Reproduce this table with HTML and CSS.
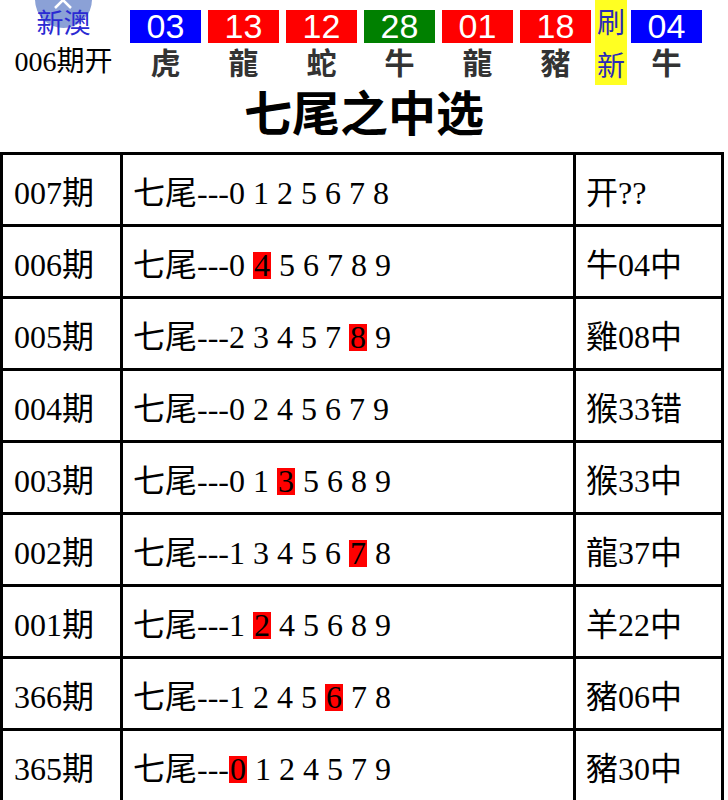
FILE: index.html
```html
<!DOCTYPE html>
<html lang="zh">
<head>
<meta charset="utf-8">
<title>七尾之中选</title>
<link rel="stylesheet" href="styles.css">
</head>
<body>
<div class="top">
  <div class="brand">
    <div class="totop"><svg width="20" height="10" viewBox="0 0 20 10"><path d="M2 9 L10 1 L18 9" fill="none" stroke="#fff" stroke-width="2.5"/></svg></div>
    <div class="xinao">新澳</div>
    <div class="issue">006期开</div>
  </div>
  <div class="balls">
    <div class="ball"><div class="num blue">03</div><div class="zod">虎</div></div>
    <div class="ball"><div class="num red">13</div><div class="zod">龍</div></div>
    <div class="ball"><div class="num red">12</div><div class="zod">蛇</div></div>
    <div class="ball"><div class="num green">28</div><div class="zod">牛</div></div>
    <div class="ball"><div class="num red">01</div><div class="zod">龍</div></div>
    <div class="ball"><div class="num red">18</div><div class="zod">豬</div></div>
    <div class="refresh">刷<br>新</div>
    <div class="ball"><div class="num blue">04</div><div class="zod">牛</div></div>
  </div>
</div>
<h1 class="title">七尾之中选</h1>
<table class="grid">
  <tr><td class="c1">007期</td><td class="c2">七尾---0 1 2 5 6 7 8</td><td class="c3">开??</td></tr>
  <tr><td class="c1">006期</td><td class="c2">七尾---0 <span class="hit">4</span> 5 6 7 8 9</td><td class="c3">牛04中</td></tr>
  <tr><td class="c1">005期</td><td class="c2">七尾---2 3 4 5 7 <span class="hit">8</span> 9</td><td class="c3">雞08中</td></tr>
  <tr><td class="c1">004期</td><td class="c2">七尾---0 2 4 5 6 7 9</td><td class="c3">猴33错</td></tr>
  <tr><td class="c1">003期</td><td class="c2">七尾---0 1 <span class="hit">3</span> 5 6 8 9</td><td class="c3">猴33中</td></tr>
  <tr><td class="c1">002期</td><td class="c2">七尾---1 3 4 5 6 <span class="hit">7</span> 8</td><td class="c3">龍37中</td></tr>
  <tr><td class="c1">001期</td><td class="c2">七尾---1 <span class="hit">2</span> 4 5 6 8 9</td><td class="c3">羊22中</td></tr>
  <tr><td class="c1">366期</td><td class="c2">七尾---1 2 4 5 <span class="hit">6</span> 7 8</td><td class="c3">豬06中</td></tr>
  <tr><td class="c1">365期</td><td class="c2">七尾---<span class="hit">0</span> 1 2 4 5 7 9</td><td class="c3">豬30中</td></tr>
</table>
</body>
</html>
```
FILE: styles.css
```css
html, body {
  margin: 0;
  padding: 0;
  background: #fff;
}
body {
  width: 728px;
  overflow: hidden;
  font-family: "Liberation Serif", "Noto Sans CJK SC", serif;
  color: #000;
}
.top {
  display: flex;
  height: 80px;
}
.brand {
  position: relative;
  width: 127px;
  margin-right: 3px;
  text-align: center;
}
.totop {
  position: absolute;
  left: 35px;
  top: -29px;
  width: 57px;
  height: 57px;
  border-radius: 50%;
  background: rgba(110, 138, 204, 0.8);
}
.totop svg {
  position: absolute;
  top: 28px;
  left: 18px;
}
.xinao {
  position: relative;
  font-family: "Noto Sans CJK SC", sans-serif;
  font-size: 27px;
  line-height: 44px;
  color: #2a2ad2;
}
.issue {
  font-size: 28px;
  line-height: 36px;
}
.balls {
  display: flex;
  gap: 7px;
}
.ball {
  width: 71px;
  display: flex;
  flex-direction: column;
  align-items: center;
}
.num {
  margin-top: 10px;
  width: 71px;
  height: 33px;
  line-height: 33px;
  text-align: center;
  font-family: "Liberation Sans", Arial, sans-serif;
  font-size: 34px;
  color: #fff;
}
.blue { background: #0000ff; }
.red { background: #ff0000; }
.green { background: #008000; }
.zod {
  margin-top: 2px;
  font-family: "Noto Sans CJK TC", "Noto Sans CJK SC", sans-serif;
  font-weight: bold;
  font-size: 30px;
  line-height: 32px;
  color: #333;
}
.refresh {
  width: 32px;
  height: 85px;
  margin: 0 -3px;
  background: #ffff22;
  color: #2a2ab8;
  font-family: "Noto Sans CJK SC", sans-serif;
  font-size: 28px;
  line-height: 43px;
  text-align: center;
}
.title {
  margin: 0;
  height: 72px;
  text-align: center;
  font-family: "Noto Sans CJK SC", sans-serif;
  font-weight: bold;
  font-size: 48px;
  line-height: 60px;
}
.grid {
  border-collapse: separate;
  border-spacing: 0;
  width: 724px;
  border-top: 3px solid #000;
  border-left: 3px solid #000;
  table-layout: fixed;
}
.grid td {
  border-right: 3px solid #000;
  border-bottom: 3px solid #000;
  height: 72px;
  padding: 0 0 0 10px;
  box-sizing: border-box;
  font-size: 32px;
  white-space: nowrap;
  vertical-align: middle;
}
.grid .c1 { width: 120px; padding-left: 11px; }
.grid .c2 { width: 453px; }
.grid .c3 { width: 148px; }
.hit {
  display: inline-block;
  background: #ff0000;
  line-height: 27px;
  padding: 0 1px;
}
```
